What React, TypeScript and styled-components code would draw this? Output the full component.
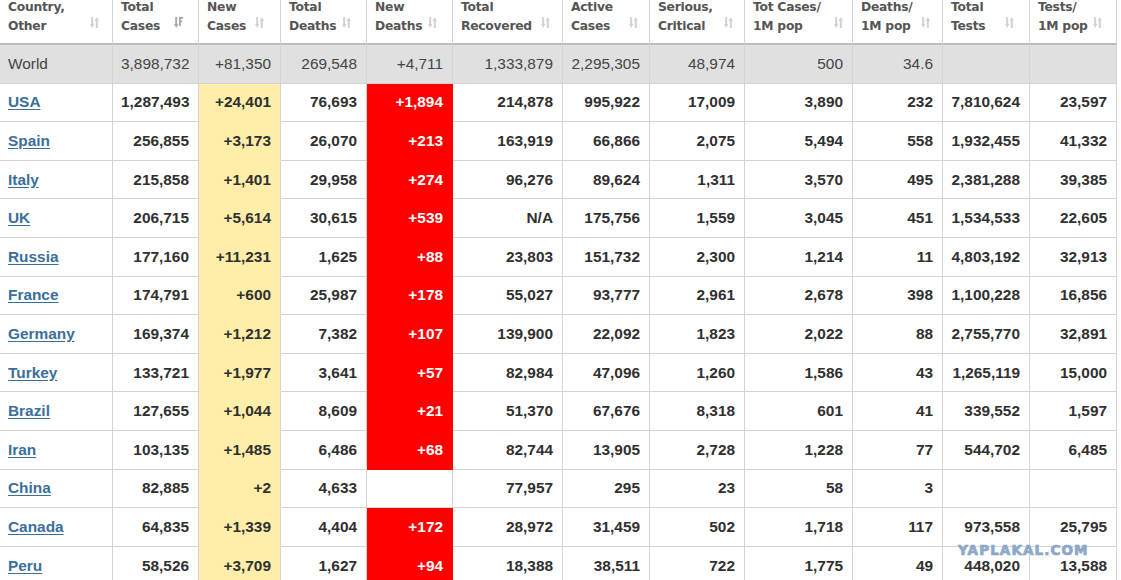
import React from 'react';
import styled, { createGlobalStyle } from 'styled-components';

const GlobalStyle = createGlobalStyle`
  html, body {
    margin: 0;
    padding: 0;
    background: #fff;
    overflow: hidden;
  }
`;

const Page = styled.div`
  position: relative;
  width: 1121px;
  height: 580px;
  overflow: hidden;
  background: #fff;
`;

const Table = styled.table`
  margin-top: -2px;
  width: 1117px;
  table-layout: fixed;
  border-collapse: separate;
  border-spacing: 0;
  font-family: 'Liberation Sans', Arial, sans-serif;
`;

const HeadCell = styled.th`
  position: relative;
  height: 45px;
  padding: 0 8px;
  vertical-align: top;
  text-align: left;
  background: #fff;
  border-right: 1px solid #d4d4d4;
  border-bottom: 2px solid #bcbcbc;
  box-shadow: 0 1px 0 #e2e2e2;
  font-family: 'DejaVu Sans', Verdana, sans-serif;
  font-size: 12.3px;
  font-weight: bold;
  letter-spacing: -0.25px;
  line-height: 18.5px;
  color: #555;
  white-space: nowrap;
`;

const SortIcon = styled.svg<{ $gap: number }>`
  position: absolute;
  right: ${(p) => p.$gap}px;
  top: 19px;
`;

const Row = styled.tr<{ $world?: boolean }>`
  background: ${(p) => (p.$world ? '#e0e0e0' : '#fff')};
`;

const Cell = styled.td<{ $world?: boolean; $tone?: 'yellow' | 'red' }>`
  height: 37.6px;
  padding: 0 9px 0 8px;
  text-align: right;
  vertical-align: middle;
  white-space: nowrap;
  font-size: 15.4px;
  font-weight: ${(p) => (p.$world ? 'normal' : 'bold')};
  color: ${(p) => (p.$world ? '#454545' : p.$tone === 'red' ? '#fff' : '#303030')};
  background: ${(p) =>
    p.$tone === 'yellow' ? '#ffeeaa' : p.$tone === 'red' ? '#ff0000' : 'transparent'};
  border-right: 1px solid ${(p) => (p.$tone === 'red' ? '#ff0000' : '#d4d4d4')};
  border-bottom: 1px solid
    ${(p) => (p.$tone === 'yellow' ? '#ffeeaa' : p.$tone === 'red' ? '#ff0000' : '#d4d4d4')};
`;

const NameCell = styled(Cell)`
  text-align: left;
  padding-left: 8px;
`;

const CountryLink = styled.a`
  color: #3a6e9b;
  text-decoration: underline;
  text-underline-offset: 2px;
  font-weight: bold;
`;

const Watermark = styled.div`
  position: absolute;
  left: 958px;
  top: 542px;
  font-family: 'DejaVu Sans', Verdana, sans-serif;
  font-size: 13.5px;
  font-weight: 900;
  letter-spacing: 1.1px;
  color: #8faacb;
  -webkit-text-stroke: 0.7px #87a3c6;
  pointer-events: none;
`;

const widths = [113, 86, 82, 86, 86, 110, 87, 95, 108, 90, 87, 87];

const headers: [string, string, number][] = [
  ['Country,', 'Other', 13],
  ['Total', 'Cases', 15],
  ['New', 'Cases', 16],
  ['Total', 'Deaths', 15],
  ['New', 'Deaths', 15],
  ['Total', 'Recovered', 12],
  ['Active', 'Cases', 11],
  ['Serious,', 'Critical', 11],
  ['Tot Cases/', '1M pop', 9],
  ['Deaths/', '1M pop', 12],
  ['Total', 'Tests', 15],
  ['Tests/', '1M pop', 14],
];

const world = ['3,898,732', '+81,350', '269,548', '+4,711', '1,333,879', '2,295,305', '48,974', '500', '34.6', '', ''];

const rows: [string, ...string[]][] = [
  ['USA', '1,287,493', '+24,401', '76,693', '+1,894', '214,878', '995,922', '17,009', '3,890', '232', '7,810,624', '23,597'],
  ['Spain', '256,855', '+3,173', '26,070', '+213', '163,919', '66,866', '2,075', '5,494', '558', '1,932,455', '41,332'],
  ['Italy', '215,858', '+1,401', '29,958', '+274', '96,276', '89,624', '1,311', '3,570', '495', '2,381,288', '39,385'],
  ['UK', '206,715', '+5,614', '30,615', '+539', 'N/A', '175,756', '1,559', '3,045', '451', '1,534,533', '22,605'],
  ['Russia', '177,160', '+11,231', '1,625', '+88', '23,803', '151,732', '2,300', '1,214', '11', '4,803,192', '32,913'],
  ['France', '174,791', '+600', '25,987', '+178', '55,027', '93,777', '2,961', '2,678', '398', '1,100,228', '16,856'],
  ['Germany', '169,374', '+1,212', '7,382', '+107', '139,900', '22,092', '1,823', '2,022', '88', '2,755,770', '32,891'],
  ['Turkey', '133,721', '+1,977', '3,641', '+57', '82,984', '47,096', '1,260', '1,586', '43', '1,265,119', '15,000'],
  ['Brazil', '127,655', '+1,044', '8,609', '+21', '51,370', '67,676', '8,318', '601', '41', '339,552', '1,597'],
  ['Iran', '103,135', '+1,485', '6,486', '+68', '82,744', '13,905', '2,728', '1,228', '77', '544,702', '6,485'],
  ['China', '82,885', '+2', '4,633', '', '77,957', '295', '23', '58', '3', '', ''],
  ['Canada', '64,835', '+1,339', '4,404', '+172', '28,972', '31,459', '502', '1,718', '117', '973,558', '25,795'],
  ['Peru', '58,526', '+3,709', '1,627', '+94', '18,388', '38,511', '722', '1,775', '49', '448,020', '13,588'],
];

// two opposite arrows, as in the unsorted column headers
const SortArrows = ({ gap }: { gap: number }) => (
  <SortIcon $gap={gap} width="9" height="11" viewBox="0 0 9 11">
    <g fill="#d2d2d2">
      <rect x="1.2" y="0" width="2" height="8" />
      <polygon points="0,7 4.4,7 2.2,11" />
      <rect x="5.8" y="3" width="2" height="8" />
      <polygon points="4.6,4 9,4 6.8,0" />
    </g>
  </SortIcon>
);

// down arrow with bars, the active sort on Total Cases
const SortActive = ({ gap }: { gap: number }) => (
  <SortIcon $gap={gap} width="9" height="11" viewBox="0 0 9 11">
    <g fill="#a9a9a9">
      <rect x="1.2" y="0" width="2" height="8" />
      <polygon points="0,7 4.4,7 2.2,11" />
      <rect x="5" y="0" width="4" height="1.8" />
      <rect x="5" y="3.4" width="3.2" height="1.8" />
      <rect x="5" y="0" width="1.8" height="9" />
    </g>
  </SortIcon>
);

const valueTone = (i: number): 'yellow' | 'red' | undefined => {
  if (i === 1) return 'yellow';
  if (i === 3) return 'red';
  return undefined;
};

const App: React.FC = () => {
  return (
    <Page>
      <GlobalStyle />
      <Table>
        <colgroup>
          {widths.map((w, i) => (
            <col key={i} style={{ width: w }} />
          ))}
        </colgroup>
        <thead>
          <tr>
            {headers.map(([a, b, gap], i) => (
              <HeadCell key={i}>
                {a}
                <br />
                {b}
                {i === 1 ? <SortActive gap={gap} /> : <SortArrows gap={gap} />}
              </HeadCell>
            ))}
          </tr>
        </thead>
        <tbody>
          <Row $world>
            <NameCell $world>World</NameCell>
            {world.map((v, i) => (
              <Cell key={i} $world>
                {v}
              </Cell>
            ))}
          </Row>
          {rows.map(([name, ...values]) => (
            <Row key={name}>
              <NameCell>
                <CountryLink href="#">{name}</CountryLink>
              </NameCell>
              {values.map((v, i) => {
                const tone = valueTone(i);
                return (
                  <Cell key={i} $tone={tone === 'red' && v === '' ? undefined : tone}>
                    {v}
                  </Cell>
                );
              })}
            </Row>
          ))}
        </tbody>
      </Table>
      <Watermark>YAPLAKAL.COM</Watermark>
    </Page>
  );
};

export default App;
